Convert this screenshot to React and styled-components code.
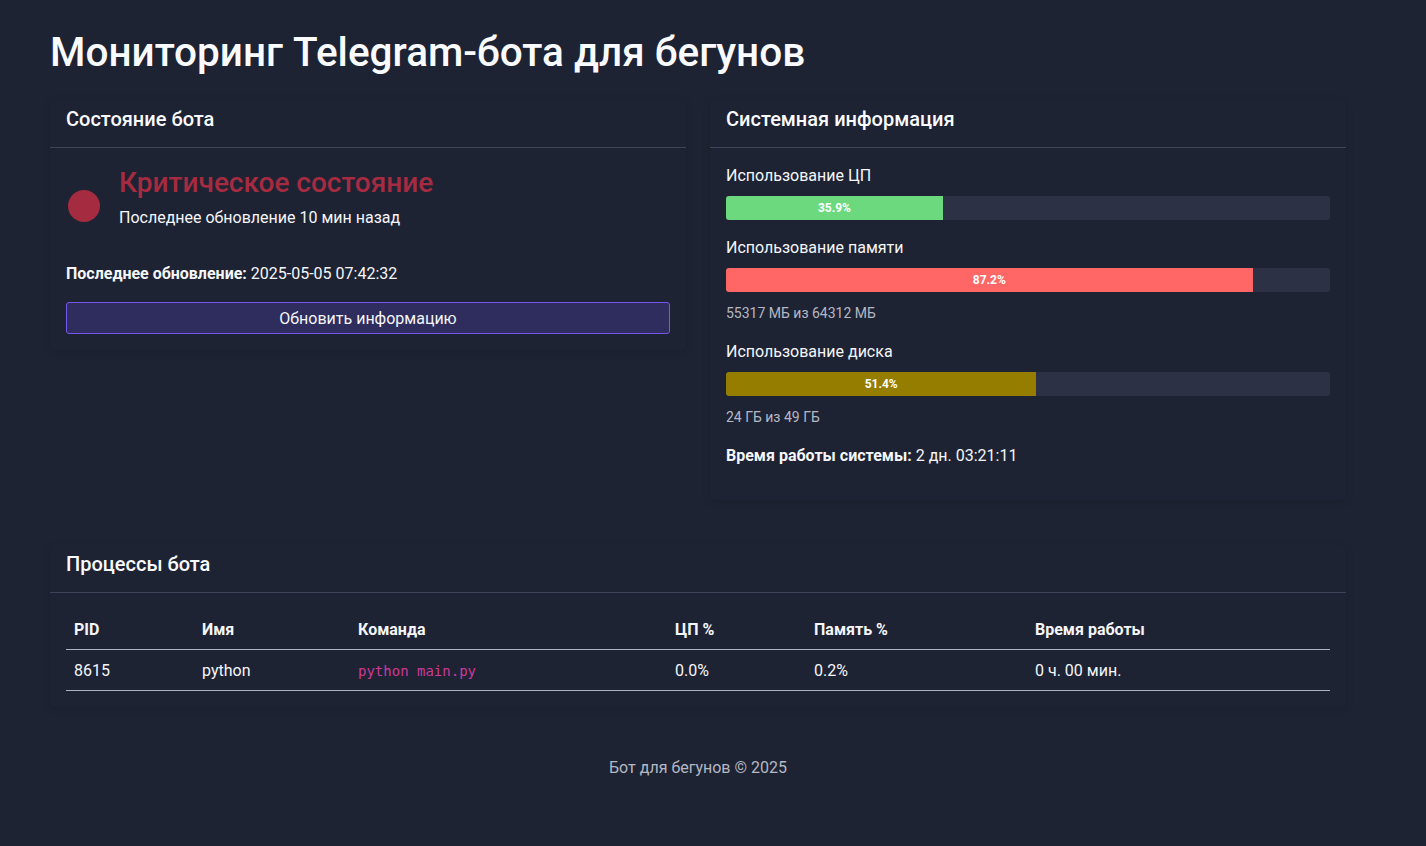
import React from "react";
import styled, { createGlobalStyle } from "styled-components";

const Global = createGlobalStyle`
  html, body { margin: 0; padding: 0; background: #1e2333; }
  body {
    font-family: Roboto, "Noto Sans", sans-serif;
    color: #f5f6fa;
    min-height: 846px;
  }
  * { box-sizing: border-box; }
`;

const Page = styled.div`
  width: 1296px;
  margin-left: 50px;
  padding-top: 28px;
`;

const Title = styled.h1`
  margin: 0 0 24px;
  font-size: 40.5px;
  line-height: 48px;
  font-weight: 500;
  color: #fafbff;
`;

const Grid = styled.div`
  display: grid;
  grid-template-columns: 1fr 1fr;
  gap: 24px;
  align-items: start;
  margin-bottom: 45px;
`;

const Card = styled.section`
  background: #1e2334;
  border-radius: 6px;
  box-shadow: 0 2px 8px rgba(0, 0, 0, 0.12);
`;

const CardHeader = styled.div`
  padding: 7px 16px 16px;
  border-bottom: 1px solid #3d4459;
  font-size: 20px;
  line-height: 24px;
  font-weight: 500;
  color: #fafbff;
`;

const CardBody = styled.div`
  padding: 16px;
`;

const StatusRow = styled.div`
  display: flex;
  align-items: center;
  gap: 19px;
  padding: 2px 0 0 2px;
`;

const Dot = styled.div`
  width: 32px;
  height: 32px;
  border-radius: 50%;
  background: ${(p) => p.$color};
  flex: none;
  margin-top: -2px;
`;

const StatusTitle = styled.div`
  font-size: 28px;
  line-height: 34px;
  font-weight: 500;
  color: #a52b40;
`;

const StatusSub = styled.div`
  font-size: 16px;
  line-height: 20px;
  margin: 8px 0 20px;
`;

const InfoLine = styled.p`
  margin: ${(p) => p.$mt || 0}px 0 ${(p) => p.$mb || 0}px;
  font-size: 16px;
  line-height: 24px;
  b { font-weight: 700; }
`;

const Button = styled.button`
  display: block;
  width: 100%;
  margin-top: 16px;
  height: 32px;
  border: 1px solid #7657ee;
  border-radius: 3px;
  background: #2f2d5d;
  color: #f5f6fa;
  font-family: inherit;
  font-size: 16px;
`;

const Metric = styled.div`
  margin-bottom: ${(p) => p.$mb}px;
`;

const MetricLabel = styled.div`
  font-size: 16px;
  line-height: 24px;
  margin-bottom: 8px;
`;

const Track = styled.div`
  height: 24px;
  border-radius: 3px;
  background: #2d3145;
  overflow: hidden;
`;

const Fill = styled.div`
  height: 100%;
  background: ${(p) => p.$color};
  display: flex;
  align-items: center;
  justify-content: center;
  font-size: 12px;
  font-weight: 700;
  color: #fff;
`;

const Sub = styled.div`
  font-size: 14px;
  line-height: 18px;
  color: #b4b8c4;
  margin-top: 12px;
`;

const Table = styled.table`
  width: 100%;
  border-collapse: collapse;
  font-size: 16px;
`;

const Th = styled.th`
  text-align: left;
  font-weight: 700;
  line-height: 24px;
  padding: 9px 8px 7px;
  border-bottom: 1px solid #aab1c3;
  width: ${(p) => p.$w};
`;

const Td = styled.td`
  padding: 9px 8px 7px;
  border-bottom: 1px solid #aab1c3;
  line-height: 24px;
`;

const Code = styled.code`
  font-family: "DejaVu Sans Mono", "Liberation Mono", monospace;
  font-size: 14px;
  color: #cc3a98;
`;

const Footer = styled.footer`
  text-align: center;
  font-size: 16px;
  line-height: 24px;
  color: #b4b8c4;
  padding-top: 49px;
`;

const metrics = [
  { label: "Использование ЦП", value: 35.9, color: "#6cd97e", sub: null, mb: 16 },
  { label: "Использование памяти", value: 87.2, color: "#ff6666", sub: "55317 МБ из 64312 МБ", mb: 18 },
  { label: "Использование диска", value: 51.4, color: "#957d00", sub: "24 ГБ из 49 ГБ", mb: 18 },
];

export default function App() {
  return (
    <>
      <Global />
      <Page>
        <Title>Мониторинг Telegram-бота для бегунов</Title>
        <Grid>
          <Card>
            <CardHeader>Состояние бота</CardHeader>
            <CardBody>
              <StatusRow>
                <Dot $color="#a52b40" />
                <div>
                  <StatusTitle>Критическое состояние</StatusTitle>
                  <StatusSub>Последнее обновление 10 мин назад</StatusSub>
                </div>
              </StatusRow>
              <InfoLine $mt={14}>
                <b>Последнее обновление:</b> 2025-05-05 07:42:32
              </InfoLine>
              <Button>Обновить информацию</Button>
            </CardBody>
          </Card>
          <Card>
            <CardHeader>Системная информация</CardHeader>
            <CardBody>
              {metrics.map((m) => (
                <Metric key={m.label} $mb={m.mb}>
                  <MetricLabel>{m.label}</MetricLabel>
                  <Track>
                    <Fill $color={m.color} style={{ width: `${m.value}%` }}>
                      {m.value}%
                    </Fill>
                  </Track>
                  {m.sub && <Sub>{m.sub}</Sub>}
                </Metric>
              ))}
              <InfoLine $mb={16}>
                <b>Время работы системы:</b> 2 дн. 03:21:11
              </InfoLine>
            </CardBody>
          </Card>
        </Grid>
        <Card>
          <CardHeader>Процессы бота</CardHeader>
          <CardBody>
            <Table>
              <thead>
                <tr>
                  <Th $w="128px">PID</Th>
                  <Th $w="156px">Имя</Th>
                  <Th $w="317px">Команда</Th>
                  <Th $w="139px">ЦП %</Th>
                  <Th $w="221px">Память %</Th>
                  <Th>Время работы</Th>
                </tr>
              </thead>
              <tbody>
                <tr>
                  <Td>8615</Td>
                  <Td>python</Td>
                  <Td><Code>python main.py</Code></Td>
                  <Td>0.0%</Td>
                  <Td>0.2%</Td>
                  <Td>0 ч. 00 мин.</Td>
                </tr>
              </tbody>
            </Table>
          </CardBody>
        </Card>
        <Footer>Бот для бегунов © 2025</Footer>
      </Page>
    </>
  );
}
